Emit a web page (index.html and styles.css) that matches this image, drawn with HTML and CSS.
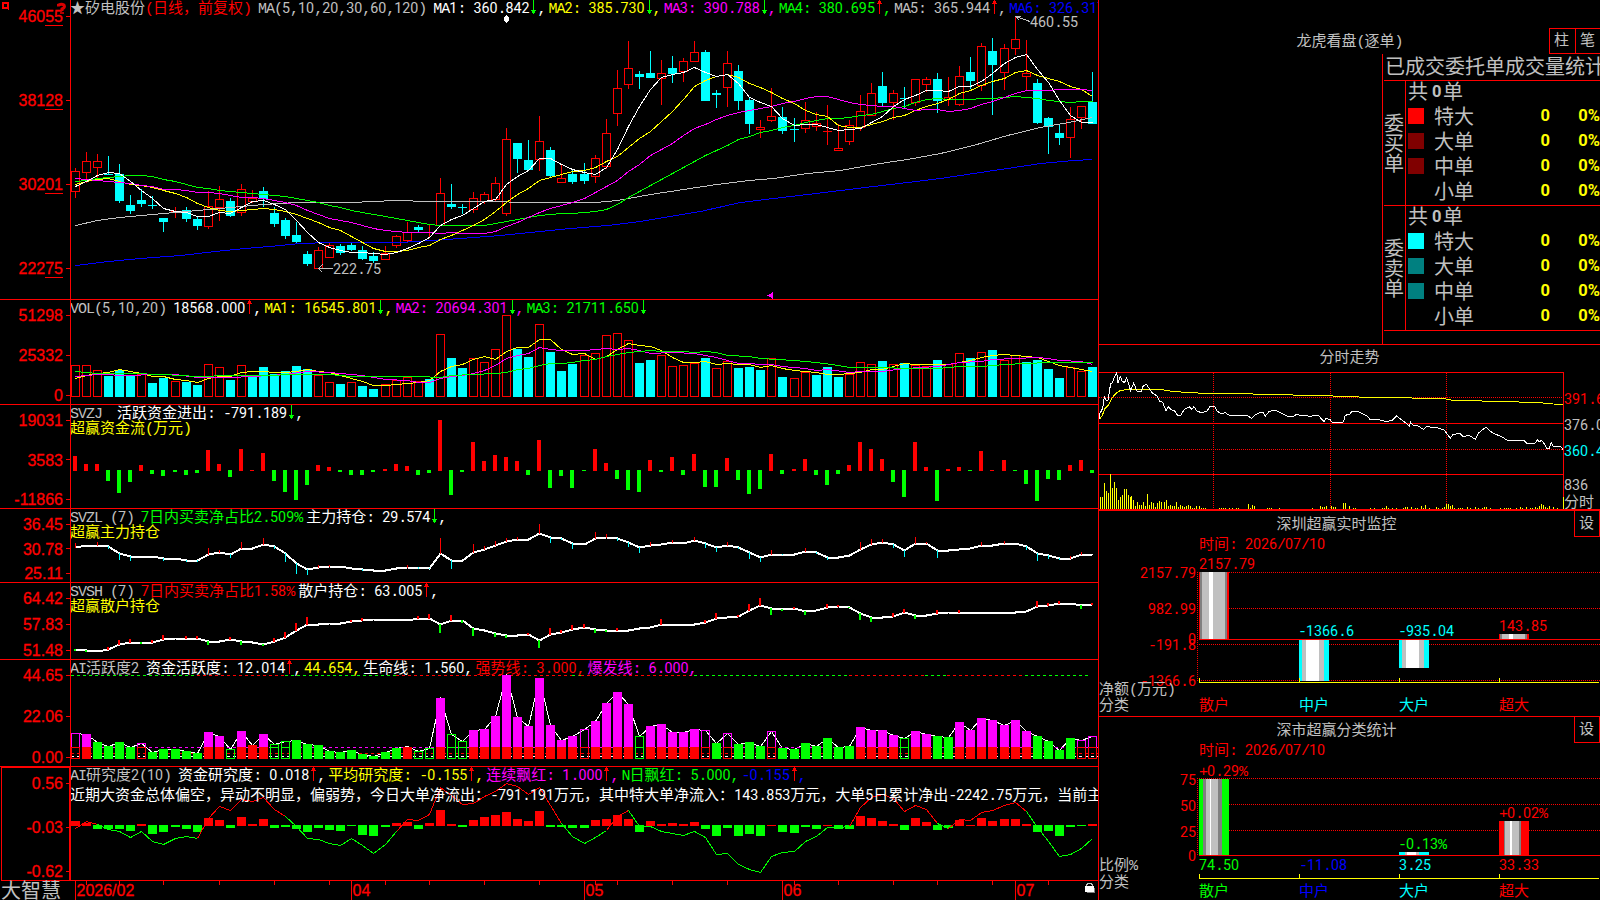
FILE: index.html
```html
<!DOCTYPE html>
<html lang="zh-CN">
<head>
<meta charset="utf-8">
<title>大智慧</title>
<link rel="stylesheet" href="styles.css">
</head>
<body>
<svg class="defs" aria-hidden="true">
  <symbol id="down" viewBox="0 0 8 16"><path d="M4 0h1v14h-1zM2 10h5v1h-5zM3 11h3v2h-3z" fill="#0f0"/></symbol>
  <symbol id="up" viewBox="0 0 8 16"><path d="M4 0h1v14h-1zM3 1h3v2h-3zM2 3h5v1h-5z" fill="#f00"/></symbol>
</svg>
<div class="terminal">
  <main class="charts">
    <section class="panel price">
      <div class="axis"><span>460<u>55</u></span><span>381<u>28</u></span><span>302<u>01</u></span><span>222<u>75</u></span></div>
      <div class="plot">
        <svg id="price" viewBox="71 0 1027 299"></svg>
        <div class="head">
          <span class="t">★矽电股份</span><span class="t red title">(日线，前复权)</span><span class="t title">MA(5,10,20,30,60,120)</span>
          <span class="t white">MA1: 360.842<svg><use href="#down"/></svg>,</span><span class="t yellow">MA2: 385.730<svg><use href="#down"/></svg>,</span><span class="t magenta">MA3: 390.788<svg><use href="#down"/></svg>,</span><span class="t green">MA4: 380.695<svg><use href="#up"/></svg>,</span><span class="t">MA5: 365.944<svg><use href="#up"/></svg>,</span><span class="t blue">MA6: 326.317</span>
        </div>
      </div>
    </section>
    <section class="panel vol">
      <div class="axis"><span>51298</span><span>25332</span><span>0</span></div>
      <div class="plot">
        <svg id="volume" viewBox="71 300 1027 104"></svg>
        <div class="head"><span class="t title">VOL(5,10,20)</span><span class="t white">18568.000<svg><use href="#up"/></svg>,</span><span class="t yellow">MA1: 16545.801<svg><use href="#down"/></svg>,</span><span class="t magenta">MA2: 20694.301<svg><use href="#down"/></svg>,</span><span class="t green">MA3: 21711.650<svg><use href="#down"/></svg></span></div>
      </div>
    </section>
    <section class="panel svzj">
      <div class="axis"><span>19031</span><span>3583</span><span>-11866</span></div>
      <div class="plot">
        <svg id="flow" viewBox="71 405 1027 103"></svg>
        <div>
          <div class="head"><span class="t title">SVZJ </span><span class="t white">活跃资金进出: -791.189<svg><use href="#down"/></svg>,</span></div>
          <div class="head sub"><span class="t yellow">超赢资金流(万元)</span></div>
        </div>
      </div>
    </section>
    <section class="panel svzl">
      <div class="axis"><span>36.45</span><span>30.78</span><span>25.11</span></div>
      <div class="plot">
        <svg id="major" viewBox="71 509 1027 73"></svg>
        <div>
          <div class="head"><span class="t title">SVZL (7)</span><span class="t green ratio-text">7日内买卖净占比2.509%</span><span class="t white">主力持仓: 29.574<svg><use href="#down"/></svg>,</span></div>
          <div class="head sub"><span class="t yellow">超赢主力持仓</span></div>
        </div>
      </div>
    </section>
    <section class="panel svsh">
      <div class="axis"><span>64.42</span><span>57.83</span><span>51.48</span></div>
      <div class="plot">
        <svg id="retail" viewBox="71 583 1027 76"></svg>
        <div>
          <div class="head"><span class="t title">SVSH (7)</span><span class="t red ratio-text">7日内买卖净占比1.58%</span><span class="t white">散户持仓: 63.005<svg><use href="#up"/></svg>,</span></div>
          <div class="head sub"><span class="t yellow">超赢散户持仓</span></div>
        </div>
      </div>
    </section>
    <section class="panel active">
      <div class="axis"><span>44.65</span><span>22.06</span><span>0.00</span></div>
      <div class="plot">
        <svg id="active" viewBox="71 660 1027 106"></svg>
        <div class="head"><span class="t title">AI活跃度2</span><span class="t white">资金活跃度: 12.014<svg><use href="#up"/></svg>,</span><span class="t yellow">44.654,</span><span class="t white">生命线: 1.560,</span><span class="t red">强势线: 3.000,</span><span class="t magenta">爆发线: 6.000,</span></div>
      </div>
    </section>
    <section class="panel research">
      <div class="axis"><span>0.56</span><span>-0.03</span><span>-0.62</span></div>
      <div class="plot">
        <svg id="research" viewBox="71 767 1027 113"></svg>
        <div>
          <div class="head"><span class="t title">AI研究度2(10)</span><span class="t white">资金研究度: 0.018<svg><use href="#up"/></svg>,</span><span class="t yellow">平均研究度: -0.155<svg><use href="#up"/></svg>,</span><span class="t magenta">连续飘红: 1.000<svg><use href="#up"/></svg>,</span><span class="t green">N日飘红: 5.000,</span><span class="t blue">-0.155<svg><use href="#up"/></svg>,</span></div>
          <div class="head note"><span class="t white">近期大资金总体偏空，异动不明显，偏弱势，今日大单净流出：-791.191万元，其中特大单净流入：143.853万元，大单5日累计净出-2242.75万元，当前主</span></div>
        </div>
      </div>
    </section>
    <footer class="dates">
      <span class="brand">大智慧</span>
      <svg id="dates" viewBox="71 880 1027 20"></svg>
    </footer>
    <svg class="corner" viewBox="0 0 70 20">
      <path d="M2 2h7v7h-7zM4 4v3h3v-3z" fill="#f00" fill-rule="evenodd"/><path d="M3 8h1v1h-1zM8 8h1v2h-1z" fill="#f00"/>
      <path d="M58.500 6.500V5Q61.500 3.500 64 5Q65.500 7.500 62 9V11" fill="none" stroke="#d80000" stroke-width="3"/><path d="M60 12h4v2h-4z" fill="#b00000"/>
    </svg>
  </main>

  <aside class="side">
    <section class="orders">
      <header class="bar"><span></span><span class="t">龙虎看盘(逐单)</span><span class="tabs"><b class="t">柱</b><b class="t">笔</b></span></header>
      <div class="board">
        <h2>已成交委托单成交量统计</h2>
        <div class="block">
          <div class="side-name"><span>委买单</span></div>
          <div class="rows">
            <div class="sum">共<b>0</b>单</div>
            <div class="row"><i class="sw r1"></i><span>特大</span><b>0</b><b>0%</b></div>
            <div class="row"><i class="sw r2"></i><span>大单</span><b>0</b><b>0%</b></div>
            <div class="row"><i class="sw r2"></i><span>中单</span><b>0</b><b>0%</b></div>
            <div class="row"><i></i><span>小单</span><b>0</b><b>0%</b></div>
          </div>
        </div>
        <div class="block">
          <div class="side-name"><span>委卖单</span></div>
          <div class="rows">
            <div class="sum">共<b>0</b>单</div>
            <div class="row"><i class="sw c1"></i><span>特大</span><b>0</b><b>0%</b></div>
            <div class="row"><i class="sw c2"></i><span>大单</span><b>0</b><b>0%</b></div>
            <div class="row"><i class="sw c2"></i><span>中单</span><b>0</b><b>0%</b></div>
            <div class="row"><i></i><span>小单</span><b>0</b><b>0%</b></div>
          </div>
        </div>
      </div>
    </section>
    <section class="intraday">
      <header class="name t">分时走势</header>
      <svg id="intraday" viewBox="1099 372 501 137"></svg>
    </section>
    <section class="stat net">
      <header class="bar"><span></span><span class="t">深圳超赢实时监控</span><span></span><b class="t set">设</b></header>
      <svg id="net" viewBox="1099 537 501 179"></svg>
    </section>
    <section class="stat ratio">
      <header class="bar"><span></span><span class="t">深市超赢分类统计</span><span></span><b class="t set">设</b></header>
      <svg id="ratio" viewBox="1099 743 501 157"></svg>
    </section>
  </aside>
</div>
<script src="charts.js"></script>
</body>
</html>
```
FILE: styles.css
```css
* { box-sizing: border-box; }
body {
  margin: 0;
  background: #000;
  color: #c0c0c0;
  font: 15px/16px "Liberation Mono", "Noto Sans CJK SC", monospace;
}
.defs { display: none; }
.terminal {
  display: grid;
  grid-template-columns: 1099px 501px;
  width: 1600px;
  height: 900px;
  overflow: hidden;
}
svg { display: block; }
.red { color: #f00; }
.white { color: #fff; }
.yellow { color: #ff0; }
.magenta { color: #f0f; }
.green { color: #0f0; }
.blue { color: #00f; }

/* fixed 8px cells for latin, 15px for han */
.t { white-space: pre; letter-spacing: -1px; font-size: 15px; line-height: 20px; font-weight: 400; }
.d { font-family: Roboto, sans-serif; font-size: 14.25px; letter-spacing: 0; font-weight: 400; line-height: 0; }
.z { font-family: "Noto Sans CJK SC", sans-serif; letter-spacing: 0; font-weight: 400; line-height: 0; }
text { font-family: "Liberation Mono", monospace; font-size: 15px; white-space: pre; }
.num { font-family: "Liberation Sans", sans-serif; font-size: 16px; stroke: #f00; stroke-width: .3px; }

.charts {
  position: relative;
  display: grid;
  grid-template-rows: 300px 105px 104px 74px 77px 107px 114px 19px;
  border-right: 1px solid #f00;
}
.panel {
  display: grid;
  grid-template-columns: 71px 1027px;
  border-bottom: 1px solid #f00;
  min-height: 0;
}
.axis {
  display: flex;
  flex-direction: column;
  justify-content: space-between;
  padding-top: 6px;
  border-right: 1px solid #f00;
  color: #f00;
  font: 16px/20px "Liberation Sans", sans-serif;
  -webkit-text-stroke: .3px #f00;
}
.axis > span { display: flex; align-items: flex-start; justify-content: flex-end; height: 18px; }
.axis > span::after { content: ""; align-self: center; width: 4px; height: 1px; margin-left: 3px; background: #f00; }
.axis u { text-decoration: none; border-bottom: 1px solid #f00; height: 19px; }
.price .axis { padding: 7px 0 22px; }
.research .axis { border: 1px solid #f00; box-shadow: inset -1px 0 #f00; margin-left: 1px; }
.research { border-bottom: 0; }

.plot { display: grid; overflow-x: clip; overflow-y: visible; min-height: 0; }
.plot > * { grid-area: 1 / 1; min-width: 0; }
.plot > svg { width: 1027px; }
.head { display: flex; height: 16px; margin-left: -1px; z-index: 1; }
.head .t { flex: none; margin-right: 3px; }
.head .title { margin-right: 7px; }
.head .ratio-text { margin-right: 4px; }
.head .t:first-child:not(.title) { margin-right: 0; }
.head .t svg { display: inline-block; width: 8px; height: 16px; vertical-align: top; }
.sub { margin-top: -1px; }
.note { margin-top: 4px; }

.dates { display: grid; grid-template-columns: 71px 1027px; }
.dates svg { margin-top: -1px; width: 1027px; height: 20px; }
.brand { font: 400 20px/18px "Noto Sans CJK SC", sans-serif; padding-left: 1px; white-space: nowrap; }
.corner { position: absolute; left: 0; top: 0; width: 70px; height: 20px; }

.side { display: grid; grid-template-rows: 345px 166px 206px 183px; min-width: 0; overflow: hidden; }
.side section { border-bottom: 1px solid #f00; min-height: 0; overflow: hidden; }
.bar { display: grid; grid-template-columns: 1fr auto 1fr; align-items: start; height: 26px; }
.bar > .t { line-height: 30px; }
.stat .bar { grid-template-columns: 1fr auto 1fr 26px; }
.orders .bar { margin-top: 28px; }
.tabs { justify-self: end; display: flex; border: 1px solid #f00; border-right: 0; }
.tabs b { width: 25px; height: 24px; line-height: 26px; padding-left: 4px; }
.tabs b + b { border-left: 1px solid #f00; }
.board { margin-left: 283px; height: 290px; border-left: 1px solid #f00; font: 400 20px/20px "Noto Sans CJK SC", sans-serif; }
.board h2 { margin: 0 0 0 1px; padding-left: 1px; height: 27px; line-height: 23px; font-size: 20px; font-weight: 400; white-space: nowrap; border-bottom: 1px solid #f00; }
.block { display: grid; grid-template-columns: 22px 194px; height: 125px; margin-left: 1px; border-bottom: 1px solid #f00; }
.side-name { display: grid; place-items: center; border-right: 1px solid #f00; }
.side-name span { width: 20px; word-break: break-all; margin-left: -1px; }
.sum { height: 24px; padding-left: 2px; line-height: 20px; display: flex; }
.sum b { width: 10px; margin: 1px 1px 0 4px; }
.row { display: grid; grid-template-columns: 28px 41px 75px 50px; align-items: center; height: 25px; padding-bottom: 3px; }
.row span { margin-top: -1px; }
.row b { color: #ff0; text-align: right; }
.rows b { font-family: Roboto, sans-serif; font-size: 16.5px; font-weight: 700; }
.sw { width: 16px; height: 16px; margin-left: 2px; }
.r1 { background: #f00; }
.r2 { background: #800000; }
.c1 { background: #0ff; }
.c2 { background: #008080; }

.side .intraday { border-bottom-width: 2px; }
.name { height: 27px; padding-top: 4px; text-align: center; }
.intraday svg { width: 501px; height: 137px; }
.side .ratio { border-bottom: 0; }
.bar > .set { justify-self: end; width: 26px; height: 26px; padding-left: 4px; line-height: 28px; border: 1px solid #f00; border-top: 0; }
.stat svg { width: 501px; }
```
FILE: charts.js
```js
const NS = 'http://www.w3.org/2000/svg';
const RED = '#f00', CYAN = '#0ff', GREEN = '#0f0', MAG = '#f0f', WHITE = '#fff', YEL = '#ff0', BLUE = '#00f', GRAY = '#c0c0c0';
const $ = id => document.getElementById(id);

// Day columns are 11px apart, with one extra pixel at these indexes.
const col = i => 75 + 11 * i + [9, 28, 46, 65, 84].filter(k => i >= k).length;

function el(parent, name, attrs, crisp = true) {
  const e = document.createElementNS(NS, name);
  for (const k in attrs) e.setAttribute(k, attrs[k]);
  if (crisp) e.setAttribute('shape-rendering', 'crispEdges');
  parent.appendChild(e);
  return e;
}
const box = (s, x, y, w, h, fill) => el(s, 'rect', { x, y, width: w, height: h, fill });
const frame = (s, x, y, w, h, c) => el(s, 'rect', { x: x + .5, y: y + .5, width: w - 1, height: h - 1, fill: 'none', stroke: c });
function dots(s, x1, y1, x2, y2, c, dash) {
  el(s, 'line', { x1, y1, x2, y2, stroke: c, 'stroke-dasharray': dash });
}
function poly(s, pts, c, w = 1) {
  el(s, 'polyline', { points: pts.map(p => p.join()).join(' '), fill: 'none', stroke: c, 'stroke-width': w });
}
const series = (ys, f) => ys.map((v, i) => [col(i) + .5, f(v) + .5]);
function sparse(flat, f) {
  const out = [];
  for (let k = 0; k < flat.length; k += 2) out.push(f(flat[k], flat[k + 1]));
  return out;
}
const nums = str => str.trim().split(/\s+/).map(Number);

// Digits and han characters take their own face and advance.
const RUNS = /([0-9]+)|([\u2600-\u27ff\u3000-\uffef]+)|([^0-9\u2600-\u27ff\u3000-\uffef]+)/g;
function typeset(node) {
  [...node.childNodes].filter(n => n.nodeType === 3).forEach(n => {
    const frag = document.createDocumentFragment();
    for (const m of n.data.matchAll(RUNS)) {
      if (m[3]) { frag.append(m[3]); continue; }
      const s = document.createElement('span');
      s.className = m[1] ? 'd' : 'z';
      s.textContent = m[0];
      frag.append(s);
    }
    n.replaceWith(frag);
  });
}
document.querySelectorAll('.t').forEach(typeset);

function label(s, x, cy, str, fill, end) {
  const t = el(s, 'text', { y: cy + 5, fill }, false);
  const adv = [...str].map(ch => ch > '\u2fff' ? 15 : 8);
  let p = end ? x - adv.reduce((a, b) => a + b, 0) : x;
  for (const m of str.matchAll(RUNS)) {
    const xs = [...m[0]].map(ch => { const q = p; p += ch > '\u2fff' ? 15 : 8; return q; });
    const ts = el(t, 'tspan', { x: xs.join(' ') }, false);
    if (m[1]) ts.setAttribute('class', 'd');
    if (m[2]) ts.setAttribute('class', 'z');
    ts.textContent = m[0];
  }
}

/* ---------- price: colour, high, top, bottom, low ---------- */
const candles = `r168,171,191,198 r152,161,172,183 r154,161,167,178 c156,174,175,175 c164,174,201,203 c195,205,211,214 c189,200,204,207
c196,205,206,209 c218,218,222,232 r207,211,211,218 c207,210,219,222 c216,219,226,230 r191,206,226,229 r186,199,207,221 c198,201,216,217
r184,189,212,216 r190,198,201,203 c187,191,199,207 c207,213,224,227 c218,220,236,239 c222,235,242,243 c251,254,264,266 r247,250,268,268
r243,245,257,257 c244,246,253,255 c243,245,250,251 c246,250,259,260 c252,256,261,263 r246,253,259,259 r235,236,245,248 r222,232,240,243
c225,227,230,232 r224,232,232,237 r178,193,225,225 c184,204,207,209 c204,207,208,214 r192,198,209,213 r192,194,201,204 r177,183,199,201
r128,139,213,216 c143,143,159,173 c140,160,170,171 r116,141,159,171 c147,150,176,177 r165,178,182,182 c169,174,182,184 c163,174,181,184
r155,158,176,183 r119,133,166,169 r70,88,113,126 r41,68,84,89 c71,74,77,89 c51,73,78,78 r60,73,78,105 c56,68,74,83 r58,61,71,82
r41,52,61,62 c50,52,101,101 c90,93,95,108 r51,63,87,107 c65,71,101,110 c97,100,124,134 r120,127,129,138 r88,116,120,122 c107,117,131,134
c118,129,130,142 r102,120,128,133 r112,123,126,131 r105,131,131,145 r124,148,150,151 r120,125,141,145 r95,111,127,131 r83,93,115,116
c72,86,103,106 r90,93,102,120 c87,98,99,108 r79,79,102,106 r77,79,84,92 c73,79,101,113 r77,97,99,106 r66,76,104,106 c57,72,81,89
r43,46,85,91 c38,51,65,115 r44,48,72,90 r16,39,48,55 r40,73,76,90 c79,83,123,124 c117,118,127,154 c124,133,138,145 r107,119,137,158
r106,106,117,129 c72,102,124,124`.split(/\s+/);
{
  const s = $('price');
  candles.forEach((c, i) => {
    const [hi, top, bot, lo] = c.slice(1).split(',').map(Number), x = col(i);
    if (c[0] === 'c') {
      box(s, x, hi, 1, Math.max(lo - hi, 1), CYAN);
      box(s, x - 4, top, 9, bot - top, CYAN);
    } else if (top === bot) {
      box(s, x, hi, 1, lo - hi, RED);
      box(s, x - 4, top, 9, 1, RED);
    } else {
      box(s, x, hi, 1, top - hi, RED);
      box(s, x, bot, 1, lo - bot, RED);
      frame(s, x - 4, top, 9, bot - top + 1, RED);
    }
  });
  const id = v => v;
  poly(s, sparse([75,225,97,220,119,217,141,215,163,213,186,211,208,209,241,206,263,204,296,202,351,202,395,200,429,201,485,201,530,202,595,202,617,200,650,194,683,189,716,184,749,180,773,178,807,173,840,170,873,164,907,159,940,153,973,145,1007,135,1040,127,1068,122,1092,117], (x, y) => [x + .5, y + .5]), GRAY);
  poly(s, sparse([75,265,108,261,140,258,180,255,215,251,245,248,280,245,300,243,330,242,400,242,430,240,460,238,500,235,540,231,570,228,607,225,640,221,670,216,700,211,740,202,773,198,807,194,840,190,873,186,907,182,940,178,973,173,1007,168,1040,163,1073,160,1092,159], (x, y) => [x + .5, y + .5]), BLUE);
  poly(s, series(nums(`181 180 178 177 176 175 175 176 179 181 184 187 188 190 191 192 193 194 195 196 198 200 202 205 207 210 212 214 216 218 220 222 224 225 225 225 225 225 223 221 219 217 215 214 213 213 212 211 209 204 197 191 185 179 173 167 161 155 150 145 139 136 132 130 127 125 122 120 118 118 117 115 114 111 108 106 102 99 98 99 99 99 98 98 97 96 97 98 100 101 102 101 101`), id), GREEN);
  poly(s, series(nums(`184 181 179 178 181 184 185 187 190 193 197 203 207 210 211 210 209 208 209 211 214 218 222 227 230 236 242 248 251 251 250 247 245 239 235 230 225 219 211 202 194 188 180 177 174 171 170 167 161 156 147 138 131 121 111 99 86 80 76 74 77 83 87 92 98 103 110 114 116 125 127 127 124 121 117 115 110 106 103 99 93 90 85 81 78 72 70 75 78 81 86 89 96`), id), YEL);
  poly(s, series(nums(`178 179 180 181 182 183 185 186 189 189 190 192 192 193 195 197 197 198 200 202 205 210 214 218 220 222 225 228 230 231 232 232 232 233 232 233 233 233 231 226 222 217 212 208 205 202 198 192 186 180 171 164 155 149 143 135 128 124 119 115 112 110 108 106 103 101 98 96 96 99 102 104 105 106 106 108 110 109 109 111 110 108 104 101 97 93 90 90 90 89 89 89 90`), id), MAG);
  poly(s, series(nums(`186 181 175 172 173 181 190 198 208 211 212 216 216 212 213 207 201 200 204 209 220 232 242 247 250 252 252 253 254 252 248 243 237 225 219 215 208 201 199 184 176 170 158 158 164 169 172 174 167 149 126 106 89 77 74 72 67 72 76 74 83 97 102 106 118 125 124 124 127 130 129 128 122 116 106 99 95 90 90 91 86 86 81 73 63 57 54 69 82 100 115 122 122`), id), WHITE);
  poly(s, [[333, 268.5], [318.5, 268.5], [322.5, 264.5]], GRAY);
  poly(s, [[318.5, 268.5], [322.5, 272.5]], GRAY);
  label(s, 333, 269, '222.75', GRAY);
  poly(s, [[1019.5, 20.5], [1015.5, 16.5], [1030, 21.5]], GRAY);
  poly(s, [[1015.5, 16.5], [1020.5, 16.5]], GRAY);
  label(s, 1030, 22, '460.55', GRAY);
  el(s, 'path', { d: 'M506 15h1v1h1v1h1v4h-1v1h-1v1h-1v-1h-1v-1h-1v-4h1v-1h1z', fill: WHITE });
  el(s, 'path', { d: 'M767 295h2v-1h2v-1h1v-1h1v7h-1v-1h-1v-1h-2v-1h-2z', fill: MAG });
}

/* ---------- indicator panels: readings are in thirds of a pixel from the panel base ---------- */
const at = base => v => base + Math.round(v / 3 - .4);
{
  const s = $('volume'), y = at(295);
  const bars = `r211 r211 r226 c243 c225 c240 r238 c264 c249 r259 c262 c270 r208 r217 c255 r211 c246 c216 c237 c228 c213 c222 r240 r262 c267 r262 c273 c282 r268 r256 r247 r259 c252 r118 c189 c219 r190 r202 r163 r61 c162 c186 r88 c171 c228 c207 r181 r175 r121 r115 r136 c204 c195 r181 r214 r211 r205 c189 r220 r199 c219 c216 c225 r190 c246 r250 r232 c240 c216 c246 r238 r202 r208 c198 r208 c204 r211 r214 c195 r208 r175 c189 r172 c165 r196 r181 c201 c195 c222 c249 r217 r229 c216`.split(' ');
  bars.forEach((b, i) => {
    const t = y(+b.slice(1)), x = col(i) - 4;
    b[0] === 'c' ? box(s, x, t, 9, 397 - t, CYAN) : frame(s, x, t, 9, 397 - t, RED);
  });
  poly(s, series(nums(`250 240 235 233 223 228 234 243 244 252 257 262 250 243 243 233 229 229 232 233 229 223 229 233 241 250 259 271 271 268 265 262 256 228 214 208 192 184 193 169 157 157 133 133 163 178 175 193 184 163 146 151 154 166 187 202 202 199 208 205 208 208 216 211 220 226 229 232 238 238 235 232 224 222 214 205 208 208 208 208 203 195 187 181 178 181 184 187 199 211 217 222 228`), y), YEL);
  poly(s, sparse([0,244,2,237,5,241,7,237,9,239,11,247,14,246,16,243,19,238,21,228,23,232,26,241,28,252,30,257,31,262,32,262,33,250,34,244,35,240,36,235,37,226,38,212,39,190,40,180,41,176,42,157,43,163,44,166,46,166,48,160,49,163,50,160,51,165,52,175,54,173,56,175,58,186,60,205,63,208,64,215,66,220,67,226,68,224,70,232,71,228,73,229,75,220,78,214,80,203,82,198,83,193,85,191,87,187,88,190,89,196,91,200,92,207], (i, v) => [col(i) + .5, y(v) + .5]), MAG);
  poly(s, sparse([0,229,2,234,5,234,8,238,11,244,14,241,17,240,20,238,23,238,25,243,28,244,31,244,33,246,34,240,36,238,38,234,39,231,40,224,41,220,42,211,43,205,44,205,45,202,46,197,47,193,48,184,49,178,50,172,51,169,52,166,53,170,55,169,56,171,57,169,58,173,59,180,61,184,62,190,65,196,67,201,69,211,70,217,73,218,75,220,78,220,80,214,82,213,84,208,86,205,88,202,92,203], (i, v) => [col(i) + .5, y(v) + .5]), GREEN);
}
{
  const s = $('flow'), y = at(295);
  nums(`483 507 507 -558 -594 -561 510 -537 -543 -531 -540 -534 465 507 -546 462 525 474 -558 -591 -615 -570 510 516 -531 -540 -540 -531 522 507 513 -540 -534 375 -600 -531 441 498 480 486 498 -540 435 -579 -543 -579 -528 462 504 -552 -585 -591 495 -531 486 -540 477 -576 -576 489 -555 -597 -582 477 -537 522 492 -540 -570 -537 510 441 462 492 -561 -606 441 516 -618 522 516 -528 468 525 495 -528 -567 -618 -552 -555 510 495 -534`)
    .forEach((v, i) => v > 0 ? box(s, col(i) - 2, y(v), 4, 471 - y(v), RED) : box(s, col(i) - 2, 470, 4, y(-v) - 470, GREEN));
}
function holding(id, line, spikes, w, down) {
  const s = $(id), y = at(505);
  poly(s, line.map((v, i) => [col(i) + .5, y(v) + .5]), WHITE, 2);
  for (let k = 0; k < spikes.length; k += 2) {
    const a = y(line[spikes[k]]), b = y(spikes[k + 1]);
    box(s, col(spikes[k]) - (w - 1), Math.min(a, b), w, Math.abs(a - b) + (b < a ? 1 : 0), b < a ? RED : down);
  }
}
holding('major', nums(`126 122 120 124 145 154 153 154 159 160 165 165 148 143 147 129 129 117 124 145 174 192 187 184 184 190 193 195 195 190 186 186 189 146 167 167 143 134 122 110 104 104 84 98 100 116 117 99 96 100 112 126 121 119 113 114 107 115 126 122 127 142 157 147 148 148 140 142 156 156 151 133 117 113 117 137 116 116 135 135 132 131 120 120 115 115 124 146 152 160 159 149 150`),
  [0,114,2,112,3,134,4,165,5,168,8,168,10,171,11,171,12,129,13,136,14,159,15,111,17,99,18,134,19,171,20,207,21,210,22,180,23,180,26,200,30,180,31,194,32,194,33,99,34,192,36,117,37,123,38,108,39,99,40,97,42,57,43,114,44,107,45,132,47,81,48,87,49,108,50,126,51,144,52,113,54,105,56,96,57,129,58,141,59,111,60,134,61,162,62,171,63,135,64,152,66,129,67,147,68,165,71,111,72,102,73,102,74,129,75,156,76,96,77,111,78,159,82,111,84,108,86,135,87,168,88,162,89,167,90,153,91,141], 1, CYAN);
holding('retail', nums(`432 436 438 434 418 413 413 412 402 401 400 399 408 408 404 410 412 417 409 396 376 357 357 355 354 349 346 344 342 342 346 340 339 358 346 347 371 377 385 391 390 388 405 388 382 373 368 374 375 375 376 371 368 357 357 357 357 352 340 337 334 317 300 311 312 311 318 317 306 305 306 324 336 337 333 323 330 331 325 323 321 321 321 321 321 321 320 304 301 295 294 300 299`),
  [0,438,1,441,3,426,4,405,5,402,6,418,7,406,8,390,10,393,11,394,12,420,14,396,15,420,17,423,18,399,19,381,20,354,21,336,25,345,26,340,31,333,32,329,33,384,34,330,35,354,36,393,38,396,39,399,41,384,42,430,43,369,44,377,45,360,46,357,47,384,48,381,49,369,53,342,57,347,58,324,60,330,61,297,62,279,63,330,64,318,65,306,66,330,68,297,69,300,70,311,71,345,72,351,74,324,75,312,76,342,78,315,80,317,87,288,88,294,89,288,91,312,92,294], 2, GREEN);
{
  // M/m: magenta over red (solid/hollow), G/g: green (solid/hollow)
  const s = $('active'), y = at(505);
  const bars = `m685 M687 G711 G723 G711 G726 m715 G741 G732 G732 G738 G744 M681 M693 g733 M678 M720 M687 g718 g709 G705 G717 G720 G738 G741 G735 G747 G753 G741 G729 M723 g739 g730 M579 g688 g709 M675 M672 M633 M510 M636 M663 M519 M660 M705 M693 m673 M648 M594 M561 M597 g694 M663 M657 M681 M681 M672 m676 G714 m685 G717 G711 G723 m679 G729 G732 G714 G723 G699 G726 G723 M666 M675 M675 M690 g700 M678 M687 G693 G696 M651 M675 M639 M645 M660 M645 M678 G693 G708 G735 G699 m706 m694`.split(' ');
  poly(s, bars.map((b, i) => [col(i) + .5, y(+b.slice(1)) + .5]), WHITE);
  [[71,197,GREEN],[197,285,RED],[285,396,GREEN],[396,572,RED],[572,581,GREEN],[581,694,RED],[694,849,GREEN],[849,925,RED],[925,947,GREEN],[947,1025,RED],[1025,1090,GREEN]]
    .forEach(([a, b, c]) => dots(s, a, 675.5, b, 675.5, c, '3 3'));
  dots(s, 71, 747.5, 1098, 747.5, MAG, '3 3');
  dots(s, 71, 753.5, 1098, 753.5, RED, '3 3');
  dots(s, 71, 756.5, 1098, 756.5, WHITE, '3 3');
  bars.forEach((b, i) => {
    const t = y(+b.slice(1)), x = col(i) - 4, k = b[0];
    if (k === 'G') box(s, x, t, 9, 759 - t, GREEN);
    else if (k === 'g') { frame(s, x, t, 9, 759 - t, GREEN); if (t < 747) box(s, x, 747, 9, 1, GREEN); }
    else if (k === 'M') { if (t < 747 && t !== 746) box(s, x, t, 9, 747 - t, t > 744 ? RED : MAG); box(s, x, 747, 9, 12, RED); }
    else { frame(s, x, t, 9, 748 - t, MAG); frame(s, x, 747, 9, 12, RED); }
  });
}
{
  const s = $('research'), y = at(755);
  nums(`198 204 -222 -222 -222 -228 207 -237 -231 -216 -222 -231 189 195 -219 186 207 192 -219 -216 -222 -231 -219 -225 -228 -213 -240 -243 -216 204 201 -222 204 165 207 -216 195 186 180 171 192 198 168 -216 -216 -219 -219 195 192 180 192 -231 198 207 204 207 201 -222 -243 -219 -243 -237 -243 210 -231 -234 -216 -222 210 -222 -222 183 189 198 207 -225 189 201 -225 -219 195 210 189 198 192 192 207 -231 -228 -243 -216 -213 207`)
    .forEach((v, i) => v > 0 ? box(s, col(i) - 4, y(v), 9, 826 - y(v), RED) : box(s, col(i) - 4, 825, 9, y(-v) - 825, GREEN));
  const avg = series(nums(`220 200 207 222 230 247 230 260 268 251 244 250 190 154 166 133 139 127 163 184 214 250 253 265 271 250 271 295 268 230 193 196 177 97 120 148 144 123 109 84 94 118 97 150 205 244 265 248 227 184 167 215 214 229 236 242 230 246 297 295 327 342 353 305 293 289 258 243 217 216 215 157 127 119 130 169 152 164 205 220 194 196 172 167 152 143 170 217 260 303 299 280 250`), y);
  [[0,2,RED],[2,11,GREEN],[11,19,RED],[19,29,GREEN],[29,44,RED],[44,48,GREEN],[48,50,RED],[50,70,GREEN],[70,78,RED],[78,79,GREEN],[79,86,RED],[86,92,GREEN]]
    .forEach(([a, b, c]) => poly(s, avg.slice(a, b + 1), c));
}
{
  const s = $('dates');
  box(s, 71, 880, 1027, 1, RED);
  [86,119,163,219,274,329,385,429,484,539,595,617,672,727,794,838,893,937,992,1048].forEach(x => box(s, x, 881, 1, 4, RED));
  [[75,'2026/02'],[351,'04'],[584,'05'],[782,'06'],[1015,'07']].forEach(([x, m]) => {
    box(s, x, 880, 1, 20, RED);
    el(s, 'text', { x: x + 1.5, y: 895.5, fill: RED, class: 'num' }, false).textContent = m;
  });
  el(s, 'path', { d: 'M1086.500 886v-2h1v-1h4v1h1v2', fill: 'none', stroke: GRAY });
  box(s, 1087, 888, 8, 5, '#808080');
  box(s, 1085, 886, 9, 6, WHITE);
}

/* ---------- intraday ---------- */
{
  const s = $('intraday');
  const pt = (x, v) => [1090 + x / 3, 340 + v / 3];
  [372, 423, 474].forEach(y => box(s, 1099, y, 465, 1, RED));
  [397, 449].forEach(y => dots(s, 1099, y + .5, 1563, y + .5, RED, '1 1'));
  [1213, 1330, 1446].forEach(x => dots(s, x + .5, 373, x + .5, 509, RED, '1 1'));
  box(s, 1563, 372, 1, 137, RED);
  sparse(nums(`31 472 37 472 43 430 49 454 55 460 61 403 67 445 73 427 79 445 85 481 91 472 97 466 103 448 109 448 115 466 121 472 124 468 130 481 136 499 142 487 148 496 154 496 160 487 166 499 172 463 178 496 184 487 190 490 196 502 202 490 208 484 214 487 223 487 229 481 235 499 241 496 247 499 253 499 259 487 265 502 271 496 277 499 283 502 289 499 295 496 301 499 307 504 313 505 319 499 328 499 334 504 340 505 346 505 388 505 394 505 400 505 406 505 418 505 427 505 439 503 445 505 475 493 481 503 487 496 493 499 532 505 538 505 544 505 568 505 668 505 692 499 698 502 704 502 710 499 725 499 731 502 737 502 761 490 767 490 779 499 791 505 797 505 842 505 854 505 878 503 884 505 890 499 896 505 908 505 920 505 941 504 947 502 953 502 965 502 977 503 983 505 995 499 1001 504 1007 496 1019 505 1040 502 1046 505 1058 504 1064 502 1070 493 1076 493 1082 499 1088 496 1094 505 1106 503 1112 505 1118 505 1133 502 1142 505 1157 502 1166 505 1178 504 1184 502 1190 502 1202 505 1232 505 1244 505 1250 505 1256 505 1262 505 1280 504 1292 502 1298 505 1310 502 1322 505 1328 505 1337 502 1343 505 1349 499 1355 493 1361 496 1367 502 1373 504 1379 499 1391 502 1403 505 1421 472`), (x, v) => {
    const t = Math.round(340 + v / 3);
    box(s, Math.floor(1090 + x / 3), t, 1, 509 - t, YEL);
  });
  poly(s, sparse(nums(`28 238 36 228 45 205 55 195 65 175 80 158 90 152 108 149 215 149 245 154 300 158 345 160 470 160 500 163 590 163 620 166 725 167 735 170 800 170 815 172 960 172 970 175 1055 175 1090 181 1170 182 1180 184 1280 184 1290 187 1350 188 1390 192 1419 194`), pt), YEL);
  poly(s, sparse(nums(`28 238 30 220 38 205 43 170 48 180 54 180 62 130 66 130 72 115 80 98 84 128 91 110 97 125 104 127 110 113 122 152 131 130 142 155 153 155 160 137 170 133 177 145 188 160 200 167 208 183 218 187 228 212 235 200 245 210 253 211 262 225 273 225 283 208 298 200 306 208 312 200 322 215 335 217 350 215 360 200 374 200 382 214 395 222 406 218 418 226 470 226 485 235 495 225 510 217 520 218 526 228 537 215 548 211 560 212 570 218 580 222 592 229 608 230 620 223 640 228 650 226 660 230 672 226 686 226 693 235 702 245 708 236 720 238 727 248 760 246 766 226 780 222 786 214 808 216 815 220 832 228 840 238 870 240 890 245 908 240 919 228 930 236 945 247 958 259 962 247 970 256 985 258 1000 268 1010 260 1040 263 1062 270 1070 280 1081 295 1088 284 1110 280 1120 290 1138 286 1156 298 1165 280 1176 270 1188 262 1200 273 1210 280 1225 286 1235 290 1250 300 1290 303 1302 301 1310 310 1335 310 1342 300 1348 305 1355 301 1362 310 1370 325 1378 325 1384 308 1390 320 1412 320 1419 328`), pt), WHITE);
  label(s, 1564, 398.5, '391.62', RED);
  label(s, 1564, 424.5, '376.00', GRAY);
  label(s, 1564, 450.5, '360.40', CYAN);
  label(s, 1564, 484.5, '836', GRAY);
  label(s, 1564, 501.5, '分时', GRAY);
}

/* ---------- category bars ---------- */
function stripes(s, x, y, h, parts) {
  parts.split(' ').forEach(p => {
    const w = parseInt(p), c = { r: RED, d: '#808080', l: GRAY, w: WHITE, c: CYAN, g: GREEN }[p.slice(-1)];
    box(s, x, y, w, h, c);
    x += w;
  });
}
function scale(s, y) {
  box(s, 1199, y, 400, 1, YEL);
  [1199, 1299, 1399, 1499].forEach(x => box(s, x, y - 4, 1, 4, YEL));
}
{
  const s = $('net');
  label(s, 1199, 544, '时间: 2026/07/10', RED);
  [572, 608, 644, 680].forEach(y => dots(s, 1199, y + .5, 1600, y + .5, RED, '1 1'));
  dots(s, 1197.5, 572, 1197.5, 681, RED, '1 1');
  stripes(s, 1199, 572, 67, '1r 2d 7l 4w 12l 2d 2r');
  stripes(s, 1299, 640, 41, '3c 4l 13w 5l 5c');
  stripes(s, 1399, 640, 28, '3c 4l 13w 5l 5c');
  stripes(s, 1499, 634, 5, '1r 2d 7l 4w 12l 2d 2r');
  box(s, 1199, 639, 401, 1, RED);
  [[573, '2157.79'], [609, '982.99'], [639, '0'], [645, '-191.8'], [681, '-1366.6']].forEach(([y, v]) => label(s, 1196, y, v, RED, true));
  label(s, 1199, 564, '2157.79', RED);
  label(s, 1298, 631, '-1366.6', CYAN);
  label(s, 1398, 631, '-935.04', CYAN);
  label(s, 1499, 626, '143.85', RED);
  scale(s, 682);
  label(s, 1099, 689, '净额(万元)', GRAY);
  label(s, 1099, 705, '分类', GRAY);
  [['散户', RED], ['中户', CYAN], ['大户', CYAN], ['超大', RED]].forEach(([n, c], i) => label(s, 1199 + 100 * i, 705, n, c));
}
{
  const s = $('ratio');
  label(s, 1199, 750, '时间: 2026/07/10', RED);
  [778, 804, 830].forEach(y => dots(s, 1199, y + .5, 1600, y + .5, RED, '1 1'));
  dots(s, 1197.5, 778, 1197.5, 856, RED, '1 1');
  stripes(s, 1199, 779, 76, '4g 3d 4l 1w 7l 4d 7g');
  stripes(s, 1399, 852, 3, '6c 2l 9w 3l 10c');
  stripes(s, 1499, 821, 34, '5r 1d 5l 2w 7l 2d 8r');
  box(s, 1199, 855, 401, 1, RED);
  [[779.5, '75'], [805.5, '50'], [831.5, '25'], [856, '0']].forEach(([y, v]) => label(s, 1196, y, v, RED, true));
  label(s, 1199, 771, '+0.29%', RED);
  label(s, 1398, 844, '-0.13%', GREEN);
  label(s, 1499, 813, '+0.02%', RED);
  [['74.50', GREEN], ['-11.08', BLUE], ['3.25', CYAN], ['33.33', RED]].forEach(([n, c], i) => label(s, 1199 + 100 * i, 865, n, c));
  scale(s, 878);
  label(s, 1099, 864.5, '比例%', GRAY);
  label(s, 1099, 882, '分类', GRAY);
  [['散户', GREEN], ['中户', BLUE], ['大户', CYAN], ['超大', RED]].forEach(([n, c], i) => label(s, 1199 + 100 * i, 891, n, c));
}
```
